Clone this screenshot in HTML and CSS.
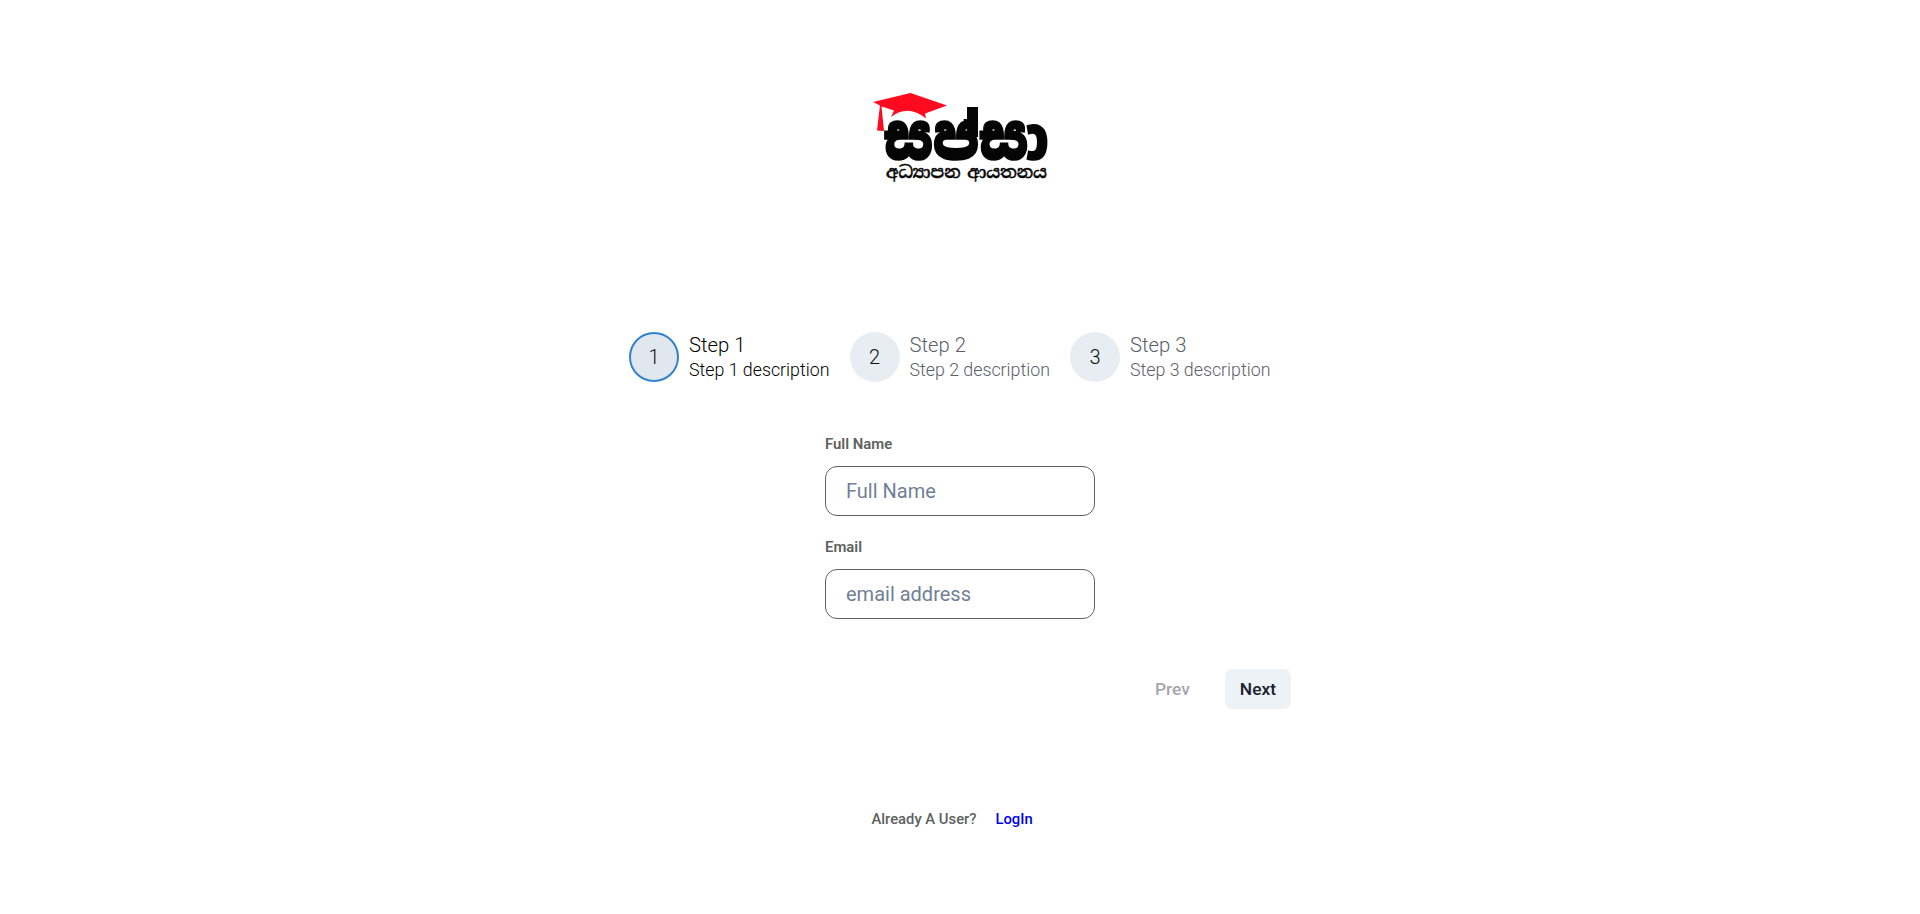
FILE: index.html
```html
<!DOCTYPE html>
<html lang="en">
<head>
<meta charset="utf-8">
<title>Register</title>
<link rel="stylesheet" href="styles.css">
</head>
<body>
<main class="page">
  <svg class="logo" viewBox="860 80 200 110" role="img">
    <defs><clipPath id="letters"><path d="M860 119H1060V164H860Z"/></clipPath></defs>
    <path class="cap" d="M873 102 910.500 93 947 105.500 925 113.500 926 118.500Q908 104 891 117L894 110.500 881.500 106.500 884 131 877 130.500 880 105.500Z"/>
    <g clip-path="url(#letters)"><text class="brand" transform="translate(0 158.500) scale(1 1.08)" x="883.500" y="0" textLength="165" lengthAdjust="spacingAndGlyphs">සප්සා</text></g>
    <path class="stem" d="M967 107h11v30h-11z"/>
    <text class="tagline" x="886" y="178" textLength="161" lengthAdjust="spacingAndGlyphs">අධ්‍යාපන ආයතනය</text>
  </svg>
  <section class="steps">
    <div class="step active"><span class="circle">1</span><div><div class="title">Step 1</div><div class="desc">Step 1 description</div></div></div>
    <div class="step"><span class="circle">2</span><div><div class="title">Step 2</div><div class="desc">Step 2 description</div></div></div>
    <div class="step"><span class="circle">3</span><div><div class="title">Step 3</div><div class="desc">Step 3 description</div></div></div>
  </section>
  <form class="form">
    <label class="label" for="name">Full Name</label>
    <input class="input" id="name" type="text" placeholder="Full Name">
    <label class="label" for="email">Email</label>
    <input class="input" id="email" type="email" placeholder="email address">
  </form>
  <div class="actions"><button class="btn prev" disabled>Prev</button><button class="btn next">Next</button></div>
  <div class="footer"><span>Already A User?</span><a href="#">LogIn</a></div>
</main>
</body>
</html>
```
FILE: styles.css
```css
* { box-sizing: border-box; }
body { margin: 0; background: #fff; font-family: Roboto, "Noto Sans", sans-serif; }
.page { width: 662px; height: 914px; margin: 0 auto; padding-top: 80px; display: flex; flex-direction: column; align-items: center; overflow: hidden; }
.logo { width: 200px; height: 110px; flex: none; }
.cap { fill: #ff0a1e; }
.stem { fill: #050505; }
.brand { font: 900 57px "Noto Sans Sinhala", "Noto Sans", sans-serif; fill: #050505; stroke: #050505; stroke-width: 1.4px; }
.tagline { font: 500 17px "Noto Serif Sinhala", "Noto Sans Sinhala", "Noto Sans", sans-serif; fill: #050505; stroke: #050505; stroke-width: .5px; word-spacing: -2px; }
.steps { width: 662px; height: 50px; margin-top: 142px; display: flex; }
.step { width: 220.5px; display: flex; gap: 10px; align-items: center; font-weight: 300; white-space: nowrap; }
.circle { width: 50px; height: 50px; flex: none; border-radius: 50%; background: #e8edf3; display: flex; align-items: center; justify-content: center; font-size: 20px; color: #111; }
.active .circle { background: #e1e7ee; border: 2px solid #3182ce; }
.title { font-size: 20.3px; line-height: 26px; }
.desc { font-size: 17.8px; line-height: 24px; }
.step:not(.active) .title, .step:not(.active) .desc { color: #5c6068; }
.active .title, .active .desc { color: #000; }
.form { width: 270px; margin-top: 51px; display: flex; flex-direction: column; }
.label { font-size: 14.9px; font-weight: 600; line-height: 22px; color: #606060; margin-bottom: 11px; }
.input { width: 270px; height: 50px; padding: 0 20px; border: 1px solid #606060; border-radius: 12px; background: #fff; font: 400 20px Roboto, sans-serif; margin-bottom: 20px; outline: none; }
.input::placeholder { color: #718096; opacity: 1; }
.actions { width: 100%; margin-top: 30px; display: flex; justify-content: flex-end; gap: 20px; }
.btn { height: 40px; padding: 0 15px; border: 0; border-radius: 7px; font: 500 17.4px Roboto, sans-serif; color: #1a202c; background: #edf2f7; }
.prev { background: transparent; opacity: .4; }
.footer { display: flex; gap: 19px; width: 177px; margin: 99px 0 0; font-size: 14.8px; line-height: 22px; font-weight: 500; color: #606060; white-space: nowrap; }
.footer a { color: #0000ee; text-decoration: none; }
```
